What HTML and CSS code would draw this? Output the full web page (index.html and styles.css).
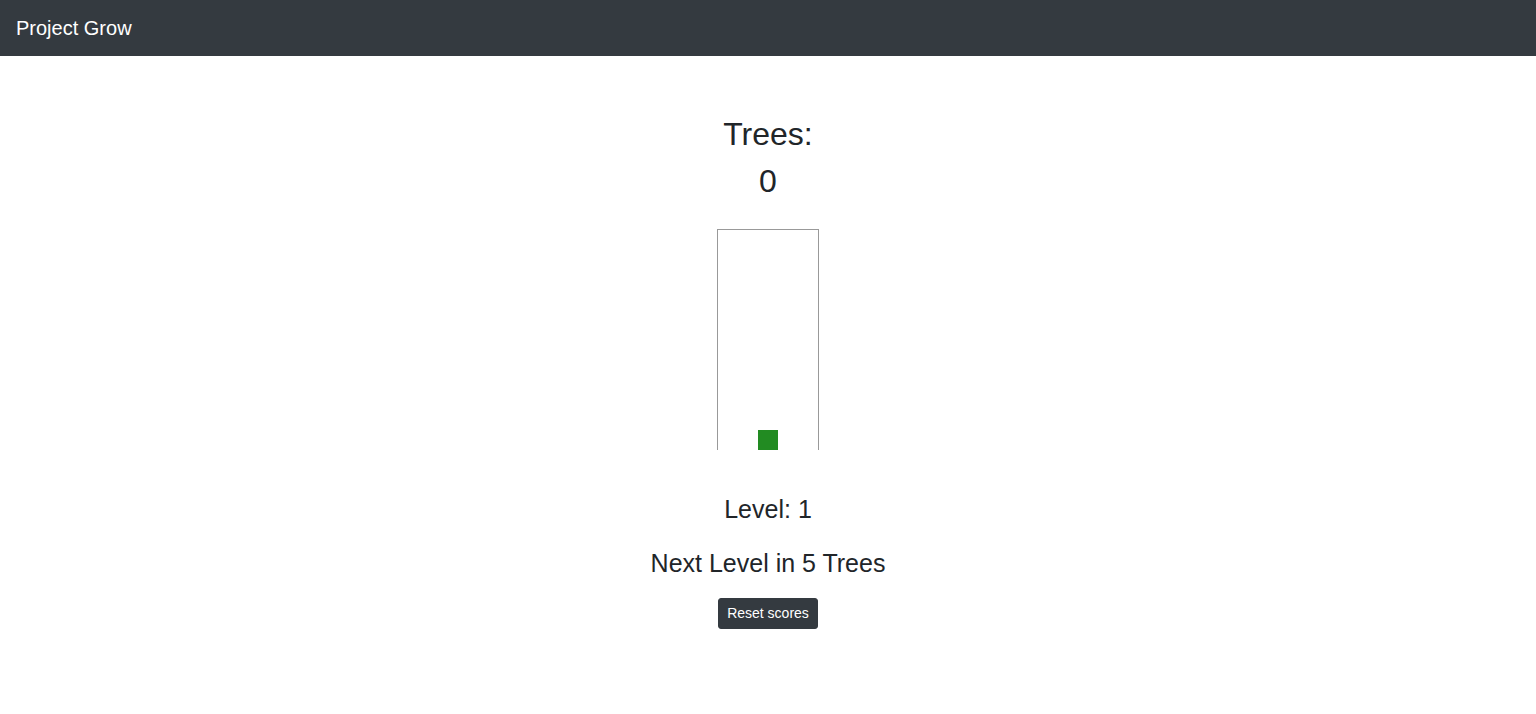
FILE: index.html
```html
<!DOCTYPE html>
<html lang="en">
<head>
<meta charset="utf-8">
<title>Project Grow</title>
<link rel="stylesheet" href="styles.css">
</head>
<body>
<nav class="navbar">
  <span class="brand">Project Grow</span>
</nav>
<main class="game">
  <h2 class="label">Trees:</h2>
  <h2 class="count">0</h2>
  <div class="pot">
    <div class="tree"></div>
  </div>
  <h4 class="level">Level: 1</h4>
  <h4 class="next">Next Level in 5 Trees</h4>
  <button class="btn-reset" type="button">Reset scores</button>
</main>
</body>
</html>
```
FILE: styles.css
```css
* { box-sizing: border-box; }
html, body {
  margin: 0;
  padding: 0;
  background: #fff;
  font-family: "Liberation Sans", Arial, sans-serif;
  color: #212529;
}
.navbar {
  height: 56px;
  background: #343a40;
  display: flex;
  align-items: center;
  padding: 0 16px;
}
.brand {
  color: #fff;
  font-size: 20px;
  line-height: 30px;
}
.game {
  display: flex;
  flex-direction: column;
  align-items: center;
  padding-top: 59px;
}
.label, .count {
  font-size: 32px;
  font-weight: 400;
  line-height: 38.4px;
  margin: 0 0 8px 0;
}
.count { margin-top: 1px; }
.pot {
  margin-top: 20px;
  width: 102px;
  height: 221px;
  border: 1px solid #999;
  border-bottom: none;
  display: flex;
  justify-content: center;
  align-items: flex-end;
}
.tree {
  width: 20px;
  height: 20px;
  background: #228b22;
}
.level, .next {
  font-size: 25px;
  font-weight: 400;
  line-height: 30px;
  margin: 0;
}
.level { margin-top: 44px; }
.next { margin-top: 24px; }
.btn-reset {
  margin-top: 20px;
  background: #343a40;
  color: #fff;
  border: 1px solid #343a40;
  border-radius: 3px;
  font-family: "Liberation Sans", Arial, sans-serif;
  font-size: 14px;
  line-height: 21px;
  padding: 4px 8px;
  width: 100px;
}
```
